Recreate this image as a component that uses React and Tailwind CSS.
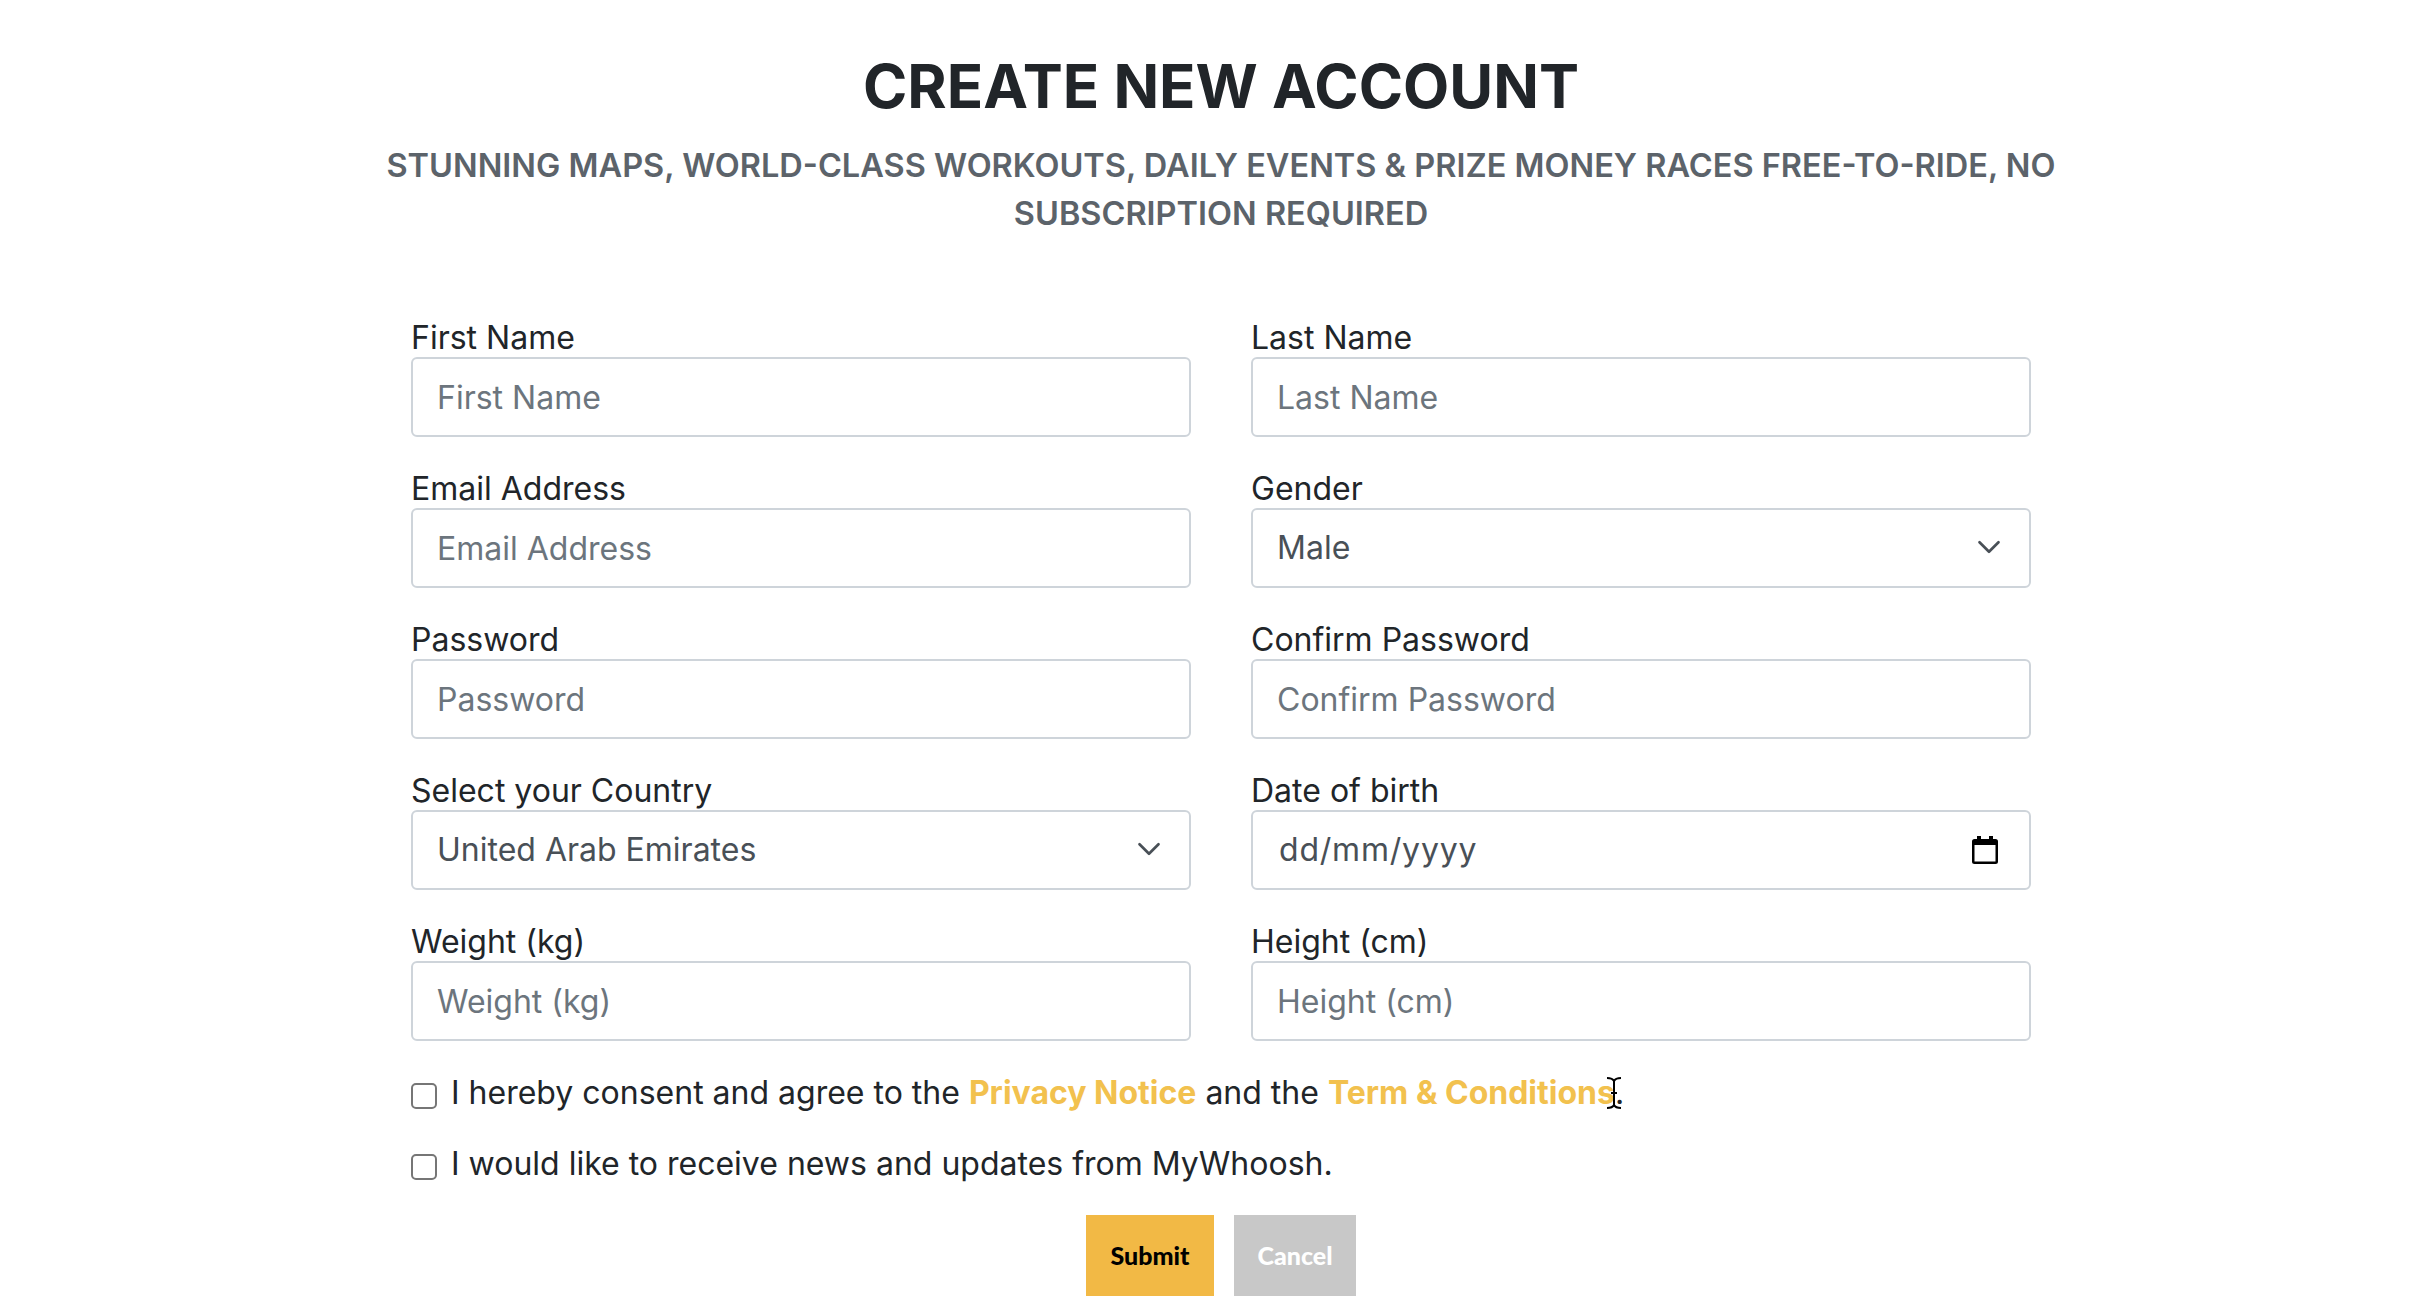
import { ChevronDown } from "lucide-react";

const inputClass =
  "w-full h-[80px] rounded-[6px] border-2 border-[#ced4da] bg-white px-[24px] text-[32px] text-[#495057] placeholder:text-[#6c757d] outline-none";

function Field({ label, children }) {
  return (
    <div className="flex flex-col">
      <label className="h-[37px] text-[32px] leading-[36px] text-[#212529]">{label}</label>
      {children}
    </div>
  );
}

function TextField({ label, type = "text" }) {
  return (
    <Field label={label}>
      <input type={type} placeholder={label} className={inputClass} />
    </Field>
  );
}

function SelectField({ label, value, options }) {
  return (
    <Field label={label}>
      <div className="relative">
        <select defaultValue={value} className={inputClass + " appearance-none"}>
          {options.map((o) => (
            <option key={o}>{o}</option>
          ))}
        </select>
        <ChevronDown className="absolute right-[23px] top-[20px] w-[38px] h-[38px] text-[#495057] pointer-events-none" strokeWidth={1.7} />
      </div>
    </Field>
  );
}

function DateField({ label }) {
  return (
    <Field label={label}>
      <div className={inputClass + " flex items-center justify-between pl-[26px] pr-[31px]"}>
        <span className="tracking-[0.8px]">dd/mm/yyyy</span>
        <svg width="26" height="28" viewBox="0 0 26 28">
          <path d="M5 0h4v3h8V0h4v3h2.500A2.500 2.500 0 0 1 26 5.500v20a2.500 2.500 0 0 1-2.500 2.500h-21A2.500 2.500 0 0 1 0 25.500v-20A2.500 2.500 0 0 1 2.500 3H5z M2.500 9v16.500h21V9z" fill="#000" fillRule="evenodd" />
        </svg>
      </div>
    </Field>
  );
}

function Check({ children }) {
  return (
    <label className="flex items-center h-[46px]">
      <input type="checkbox" className="appearance-none w-[26px] h-[26px] mr-[14px] mt-[6px] rounded-[5px] border-2 border-[#767676] bg-white shrink-0" />
      <span className="text-[32px] text-[#212529]">{children}</span>
    </label>
  );
}

export default function App() {
  return (
    <div className="h-[1296px] overflow-hidden bg-white pl-[18px] font-['Inter',sans-serif]">
      <div className="w-[1720px] mx-auto pt-[47px] text-center">
        <h1 className="text-[60px] leading-[78px] font-bold text-[#212529]">CREATE NEW ACCOUNT</h1>
        <h2 className="mt-[17px] text-[32.500px] leading-[48px] font-semibold text-[#5c636a]">
          STUNNING MAPS, WORLD-CLASS WORKOUTS, DAILY EVENTS &amp; PRIZE MONEY RACES FREE-TO-RIDE, NO SUBSCRIPTION REQUIRED
        </h2>
      </div>

      <form className="w-[1620px] mx-auto mt-[82px]">
        <div className="grid grid-cols-2 gap-x-[60px] gap-y-[34px]">
          <TextField label="First Name" />
          <TextField label="Last Name" />
          <TextField label="Email Address" type="email" />
          <SelectField label="Gender" value="Male" options={["Male", "Female"]} />
          <TextField label="Password" type="password" />
          <TextField label="Confirm Password" type="password" />
          <SelectField label="Select your Country" value="United Arab Emirates" options={["United Arab Emirates", "Saudi Arabia"]} />
          <DateField label="Date of birth" />
          <TextField label="Weight (kg)" />
          <TextField label="Height (cm)" />
        </div>

        <div className="mt-[29px] flex flex-col gap-[25px]">
          <Check>
            I hereby consent and agree to the <a className="font-bold text-[#f2c14e]">Privacy Notice</a> and the{" "}
            <span className="relative">
              <a className="font-bold text-[#f2c14e]">Term &amp; Conditions</a>.
              <svg className="absolute right-[2px] top-[4px]" width="16" height="32" viewBox="0 0 16 32">
                <path d="M1 1c4 0 6 1 7 3 1-2 3-3 7-3M8 4v24M1 31c4 0 6-1 7-3 1 2 3 3 7 3M5 16h6" fill="none" stroke="#000" strokeWidth="2" />
              </svg>
            </span>
          </Check>
          <Check>I would like to receive news and updates from MyWhoosh.</Check>
        </div>

        <div className="mt-[28px] flex justify-center gap-[20px]">
          <button type="button" className="w-[128px] h-[81px] bg-[#f2b945] text-[25px] font-black text-black font-['Lato',sans-serif]">Submit</button>
          <button type="button" className="w-[122px] h-[81px] bg-[#c8c8c8] text-[25px] font-black text-white font-['Lato',sans-serif]">Cancel</button>
        </div>
      </form>
    </div>
  );
}
